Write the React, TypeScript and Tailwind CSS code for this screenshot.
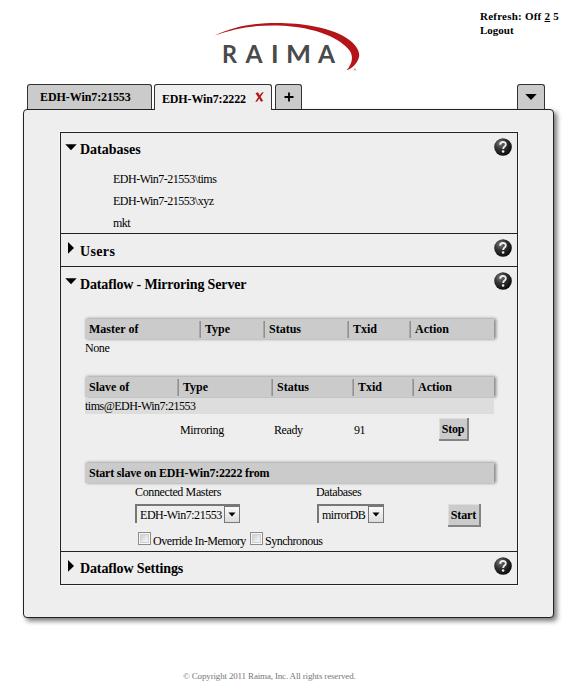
import React from "react";

function Help() {
  return (
    <svg className="block shrink-0" width="18" height="18" viewBox="0 0 18 18">
      <defs>
        <radialGradient id="ball" cx="0.35" cy="0.3" r="0.75">
          <stop offset="0" stopColor="#777" />
          <stop offset="0.45" stopColor="#333" />
          <stop offset="1" stopColor="#080808" />
        </radialGradient>
      </defs>
      <circle cx="9" cy="9" r="8.8" fill="url(#ball)" />
      <path d="M6.2 6.7 C6.2 3.2 11.8 3.2 11.8 6.4 C11.8 8.6 9.2 8.4 9.2 10.9" fill="none" stroke="#eee" strokeWidth="1.9" />
      <circle cx="9.1" cy="13.5" r="1.25" fill="#eee" />
    </svg>
  );
}

function Arrow({ open }: { open?: boolean }) {
  return (
    <svg className="block shrink-0" width="12" height="12" viewBox="0 0 12 12">
      <path d={open ? "M0.3 2.2H11.7L6 8.3Z" : "M3 0V11.8L9 6Z"} fill="#000" />
    </svg>
  );
}

function Heading({ title, open, cls }: { title: string; open?: boolean; cls: string }) {
  return (
    <div className="flex h-8 items-start pl-1 pr-[5px]">
      <div className={open ? "pt-[9px]" : "pt-2"}>
        <Arrow open={open} />
      </div>
      <h2 className={`ml-[3px] grow text-[14px] leading-[18px] font-bold ${cls}`}>{title}</h2>
      <div className="pt-[5px]">
        <Help />
      </div>
    </div>
  );
}

function HeaderBar({ cells }: { cells: { text: string; cls: string }[] }) {
  return (
    <div className="flex h-5 w-[409px] bg-[#cbcbcb] shadow-[2px_0_3px_#888,1px_-1px_3px_#d0d0d0]">
      {cells.map((c, i) => (
        <div key={c.text} className={`flex h-5 items-center justify-between pl-1 text-[12px] leading-4 font-bold whitespace-nowrap ${c.cls}`}>
          <span className="pb-px">{c.text}</span>
          {i < cells.length - 1 && <span className="h-[17px] w-[2px] bg-linear-to-l from-[#858585] to-[#b4b4b4]" />}
        </div>
      ))}
    </div>
  );
}

function Select({ value, cls }: { value: string; cls: string }) {
  return (
    <div className={`flex h-[19px] items-start border-t-2 border-l-2 border-[#777] bg-[#eee] ${cls}`}>
      <span className="grow pt-px pl-[3px] text-[12px] leading-4 whitespace-nowrap">{value}</span>
      <span className="flex h-[17px] w-4 shrink-0 items-center justify-center border border-[#777] bg-linear-to-b from-[#fafafa] to-[#ddd]">
        <svg width="8" height="5" viewBox="0 0 8 5">
          <path d="M0.5 0.5H7.5L4 4.5Z" fill="#000" />
        </svg>
      </span>
    </div>
  );
}

function Button({ children, cls }: { children: React.ReactNode; cls: string }) {
  return (
    <button
      className={`block h-[23px] border-r-2 border-b-2 border-[#848484] bg-[#cbcbcb] pt-px text-[12px] leading-5 font-bold shadow-[inset_1px_1px_0_#ddd] ${cls}`}
    >
      {children}
    </button>
  );
}

function Checkbox() {
  return (
    <span className="flex h-[13px] w-[13px] shrink-0 items-center justify-center border border-[#8b8b8b] bg-[#f8f8f8]">
      <span className="h-[9px] w-[9px] border border-[#d0d0d0] bg-linear-to-br from-[#d0d0d0] to-[#f8f8f8]" />
    </span>
  );
}

export default function App() {
  return (
    <div className="h-[697px] w-[583px] overflow-hidden bg-white font-['Liberation_Serif','Times_New_Roman',serif] text-[12px] leading-4 text-black">
      <header className="flex h-[84px]">
        <svg className="ml-[200px] mt-[10px] block" width="180" height="70" viewBox="0 0 180 70">
          <path
            d="M14.5 25.5 C35 16 55 13 77 13 C100 13 133 17 150 30.5 C157 36 160 42 159 47 C157.500 53.500 152 58.500 146.500 60.500 C152 54 154 47 149.500 40.500 C142 30 118 16.500 77 15.500 C55 15 35 18 14.500 25.500Z"
            fill="#b41519"
          />
          <g fill="#484a4b" fontFamily="Lato" fontWeight="700" fontSize="25.5">
            <text x="22" y="52.5" textLength="15" lengthAdjust="spacingAndGlyphs">R</text>
            <text x="45.5" y="52.5" textLength="17" lengthAdjust="spacingAndGlyphs">A</text>
            <text x="71" y="52.5">I</text>
            <text x="86" y="52.5" textLength="25" lengthAdjust="spacingAndGlyphs">M</text>
            <text x="118" y="52.5" textLength="17" lengthAdjust="spacingAndGlyphs">A</text>
          </g>
          <circle cx="155" cy="59.5" r="0.9" fill="#c77" />
        </svg>
        <div className="ml-[100px] pt-[9px] text-[11px] leading-[14px] font-bold whitespace-nowrap">
          <div className="tracking-[0.23px]">
            Refresh: Off <span className="underline">2</span> 5
          </div>
          <div>Logout</div>
        </div>
      </header>

      <nav className="relative z-10 flex h-[25px] items-start pl-[27px] font-bold whitespace-nowrap">
        <div className="h-[25px] w-[125px] rounded-t-[3px] border border-b-0 border-[#333] bg-[#cbcbcb] pt-[4px] pl-[12px] tracking-[-0.08px]">
          EDH-Win7:21553
        </div>
        <div className="ml-[2px] flex h-[26px] w-[118px] rounded-t-[3px] border border-b-0 border-[#333] bg-[#eee] pt-[6px] pl-[7px]">
          <span className="w-[93px] tracking-[-0.15px]">EDH-Win7:2222</span>
          <svg className="mt-px" width="9" height="11" viewBox="0 0 9 11">
            <path d="M0.5 1.2L3 0.2L4.7 3.2L6.8 0.4L8.8 0.2L5.6 4.8L8.2 9L6 9.8L4.2 6.6L2.2 9.6L0.2 9.8L3.2 5.2Z" fill="#b41519" />
          </svg>
        </div>
        <div className="ml-[3px] flex h-[25px] w-[27px] items-center justify-center rounded-t-[3px] border border-b-0 border-[#333] bg-[#cbcbcb]">
          <svg width="10" height="10" viewBox="0 0 10 10">
            <path d="M5 0.5V9.5M0.5 5H9.5" stroke="#000" strokeWidth="1.8" />
          </svg>
        </div>
        <div className="ml-[215px] flex h-[25px] w-[28px] items-center justify-center rounded-t-[3px] border border-b-0 border-[#333] bg-[#cbcbcb]">
          <svg width="12" height="6" viewBox="0 0 12 6">
            <path d="M0.3 0H11.7L6 6Z" fill="#000" />
          </svg>
        </div>
      </nav>

      <main className="ml-[23px] h-[509px] w-[531px] rounded-[4px] border border-[#222] bg-[#eee] pt-[22px] pl-9 shadow-[3px_3px_5px_#777]">
        <div className="h-[453px] w-[458px] border border-[#222] shadow-[0_0_1px_1px_#f8f8f8]">
          <section className="h-[101px] border-b border-[#222]">
            <Heading title="Databases" open cls="mt-2" />
            <ul className="pt-[3px] pl-[52px] leading-[22px] tracking-[-0.5px]">
              <li>EDH-Win7-21553\tims</li>
              <li>EDH-Win7-21553\xyz</li>
              <li>mkt</li>
            </ul>
          </section>

          <section className="h-[33px] border-b border-[#222]">
            <Heading title="Users" cls="mt-[9px] tracking-[0.35px]" />
          </section>

          <section className="h-[285px] border-b border-[#222]">
            <Heading title="Dataflow - Mirroring Server" open cls="mt-[9px] tracking-[-0.15px]" />
            <div className="pt-5 pl-6">
              <HeaderBar
                cells={[
                  { text: "Master of", cls: "w-[116px]" },
                  { text: "Type", cls: "w-[64px]" },
                  { text: "Status", cls: "w-[84px]" },
                  { text: "Txid", cls: "w-[62px]" },
                  { text: "Action", cls: "w-[83px]" },
                ]}
              />
              <div className="pt-px pb-px tracking-[-0.4px]">None</div>

              <div className="mt-5">
                <HeaderBar
                  cells={[
                    { text: "Slave of", cls: "w-[94px]" },
                    { text: "Type", cls: "w-[94px]" },
                    { text: "Status", cls: "w-[81px]" },
                    { text: "Txid", cls: "w-[60px]" },
                    { text: "Action", cls: "w-[80px]" },
                  ]}
                />
              </div>
              <div className="mt-px h-4 w-[409px] bg-[#ddd] leading-[17px] tracking-[-0.5px]">tims@EDH-Win7:21553</div>
              <div className="flex h-[49px] items-start tracking-[-0.4px]">
                <span className="ml-[95px] w-[94px] pt-2">Mirroring</span>
                <span className="w-[80px] pt-2">Ready</span>
                <span className="w-[85px] pt-2">91</span>
                <Button cls="mt-1 w-[30px] tracking-[-0.2px]">Stop</Button>
              </div>

              <HeaderBar cells={[{ text: "Start slave on EDH-Win7:2222 from", cls: "w-[409px] tracking-[-0.2px]" }]} />
              <div className="flex pt-px pl-[50px] tracking-[-0.37px]">
                <span className="w-[181px]">Connected Masters</span>
                <span>Databases</span>
              </div>
              <div className="mt-1 flex h-[28px] items-start pl-[50px]">
                <Select value="EDH-Win7:21553" cls="w-[105px] tracking-[-0.45px]" />
                <Select value="mirrorDB" cls="ml-[77px] w-[67px] tracking-[-0.5px]" />
                <Button cls="ml-[64px] w-[33px] tracking-[-0.1px]">Start</Button>
              </div>
              <div className="flex items-start pl-[53px] whitespace-nowrap">
                <Checkbox />
                <span className="ml-[2px] w-[97px] pt-px tracking-[-0.45px]">Override In-Memory</span>
                <Checkbox />
                <span className="ml-[2px] pt-px tracking-[-0.48px]">Synchronous</span>
              </div>
            </div>
          </section>

          <section className="h-[32px]">
            <Heading title="Dataflow Settings" cls="mt-2 tracking-[-0.13px]" />
          </section>
        </div>
      </main>

      <footer className="ml-[183px] mt-[50px] text-[9px] tracking-[-0.16px] text-[#777] whitespace-nowrap">
        © Copyright 2011 Raima, Inc. All rights reserved.
      </footer>
    </div>
  );
}
